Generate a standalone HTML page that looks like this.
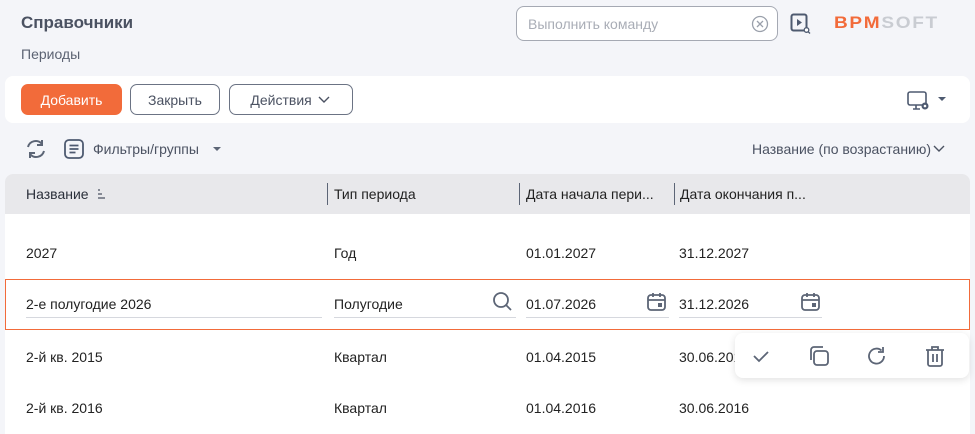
<!DOCTYPE html><html><head><meta charset="utf-8"><style>
body{margin:0;width:975px;height:434px;overflow:hidden;background:#f4f5f9;font-family:"Liberation Sans",sans-serif;position:relative;color:#1f2533}
.a{position:absolute}
.btn{position:absolute;top:84px;height:31px;box-sizing:border-box;border:1px solid #6b7384;border-radius:7px;background:#fff;font-size:14px;color:#4b5262;display:flex;align-items:center;justify-content:center}
.t{position:absolute;font-size:14px;color:#222}
.ul{position:absolute;height:1px;background:#d6d8de}
</style></head><body>
<div class="a" style="left:21px;top:13px;font-size:17px;font-weight:bold;color:#4b5262">Справочники</div>
<div class="a" style="left:21px;top:46px;font-size:14px;color:#5c6373">Периоды</div>
<div class="a" style="left:516px;top:6px;width:262px;height:35px;box-sizing:border-box;border:1px solid #a5a9b3;border-radius:8px;background:#fff"></div>
<div class="a" style="left:528px;top:16px;font-size:14px;color:#a9adb6">Выполнить команду</div>
<svg class="a" style="left:751px;top:15px" width="18" height="18"><circle cx="9" cy="9" r="7.5" fill="none" stroke="#9aa0ab" stroke-width="1.3"/><path d="M6 6l6 6M12 6l-6 6" stroke="#9aa0ab" stroke-width="1.3"/></svg>
<svg class="a" style="left:790px;top:13px" width="22" height="22"><rect x="1.5" y="1.5" width="15" height="16" rx="2" fill="none" stroke="#4e5a70" stroke-width="2"/><path d="M7 6l5 3.5-5 3.5z" fill="#4e5a70"/><circle cx="16.5" cy="17" r="2.3" fill="#fff" stroke="#4e5a70" stroke-width="1.3"/><path d="M18 18.5l2 2" stroke="#4e5a70" stroke-width="1.3"/></svg>
<div class="a" style="left:834px;top:13px;font-size:17px;font-weight:bold;letter-spacing:1.5px;transform:scaleX(1.12);transform-origin:left"><span style="color:#f26b3a">BPM</span><span style="color:#c9ccd2">SOFT</span></div>
<div class="a" style="left:5px;top:76px;width:965px;height:47px;background:#fff;border-radius:8px"></div>
<div class="btn" style="left:21px;width:101px;background:#f26b3a;border-color:#f26b3a;color:#fff">Добавить</div>
<div class="btn" style="left:130px;width:90px">Закрыть</div>
<div class="btn" style="left:229px;width:124px">Действия&nbsp;<svg width="16" height="10"><path d="M3 2l5 5 5-5" fill="none" stroke="#4b5262" stroke-width="1.4"/></svg></div>
<svg class="a" style="left:907px;top:90px" width="24" height="22"><rect x="1" y="2" width="18" height="13" rx="2" fill="none" stroke="#4e5a70" stroke-width="1.6"/><path d="M6 19h7M9 15v4" stroke="#4e5a70" stroke-width="1.6"/><circle cx="18" cy="16" r="3.5" fill="#4e5a70"/><circle cx="18" cy="16" r="1.3" fill="#fff"/></svg>
<svg class="a" style="left:937px;top:96px" width="10" height="6"><path d="M1 1h8l-4 4z" fill="#4e5a70"/></svg>
<svg class="a" style="left:25px;top:138px" width="22" height="22"><path d="M3 9a8 8 0 0 1 14-3M19 13a8 8 0 0 1-14 3" fill="none" stroke="#5c6576" stroke-width="2"/><path d="M17 2v5h-5M5 20v-5h5" fill="none" stroke="#5c6576" stroke-width="2"/></svg>
<svg class="a" style="left:63px;top:138px" width="22" height="22"><rect x="2" y="2" width="18" height="18" rx="4" fill="none" stroke="#4e5a70" stroke-width="1.8"/><path d="M6.5 7.5h9M6.5 11h9M6.5 14.5h6" stroke="#4e5a70" stroke-width="1.8"/></svg>
<div class="a" style="left:93px;top:141px;font-size:14px;color:#4b5262">Фильтры/группы</div>
<svg class="a" style="left:212px;top:146px" width="10" height="6"><path d="M1 1h8l-4 4z" fill="#5c6576"/></svg>
<div class="a" style="left:752px;top:141px;font-size:14px;color:#4b5262">Название (по возрастанию)</div>
<svg class="a" style="left:932px;top:144px" width="14" height="10"><path d="M2 2l5 5 5-5" fill="none" stroke="#4b5262" stroke-width="1.4"/></svg>
<div class="a" style="left:5px;top:174px;width:965px;height:260px;background:#fff;border-radius:8px 8px 0 0"></div>
<div class="a" style="left:5px;top:174px;width:965px;height:40px;background:#e8e8eb;border-radius:8px 8px 0 0"></div>
<div class="t" style="left:26px;top:186px;color:#2a2f3a">Название</div>
<svg class="a" style="left:96px;top:188px" width="10" height="12"><path d="M2 2h2M2 6h4M2 10h7" stroke="#4b5262" stroke-width="1.3"/></svg>
<div class="a" style="left:327px;top:183px;width:1px;height:22px;background:#5c6576"></div>
<div class="t" style="left:334px;top:186px">Тип периода</div>
<div class="a" style="left:519px;top:183px;width:1px;height:22px;background:#5c6576"></div>
<div class="t" style="left:526px;top:186px">Дата начала пери...</div>
<div class="a" style="left:674px;top:183px;width:1px;height:22px;background:#5c6576"></div>
<div class="t" style="left:680px;top:186px">Дата окончания п...</div>
<div class="t" style="left:26px;top:245px">2027</div><div class="t" style="left:334px;top:245px">Год</div><div class="t" style="left:526px;top:245px">01.01.2027</div><div class="t" style="left:679px;top:245px">31.12.2027</div>
<div class="a" style="left:5px;top:279px;width:965px;height:1px;background:#f26b3a;z-index:5"></div>
<div class="a" style="left:5px;top:329px;width:965px;height:1px;background:#f26b3a;z-index:5"></div>
<div class="a" style="left:5px;top:279px;width:1px;height:51px;background:#f26b3a;z-index:5"></div>
<div class="a" style="left:969px;top:279px;width:1px;height:51px;background:#f26b3a;z-index:5"></div>
<div class="t" style="left:26px;top:296px">2-е полугодие 2026</div><div class="ul" style="left:26px;top:317px;width:296px"></div>
<div class="t" style="left:334px;top:296px">Полугодие</div><div class="ul" style="left:334px;top:317px;width:182px"></div>
<svg class="a" style="left:492px;top:291px" width="22" height="22"><circle cx="9" cy="9" r="7" fill="none" stroke="#5c6576" stroke-width="1.8"/><path d="M14 14l5 5" stroke="#5c6576" stroke-width="1.8"/></svg>
<div class="t" style="left:526px;top:296px">01.07.2026</div><div class="ul" style="left:526px;top:317px;width:143px"></div>
<div class="t" style="left:679px;top:296px">31.12.2026</div><div class="ul" style="left:679px;top:317px;width:143px"></div>
<svg class="a" style="left:646px;top:291px" width="22" height="22"><rect x="2" y="4" width="17" height="15" rx="3" fill="none" stroke="#5c6576" stroke-width="1.8"/><path d="M2 9h17M7 2v4M14 2v4" stroke="#5c6576" stroke-width="1.8"/><rect x="12" y="12" width="4" height="4" fill="#5c6576"/></svg>
<svg class="a" style="left:800px;top:291px" width="22" height="22"><rect x="2" y="4" width="17" height="15" rx="3" fill="none" stroke="#5c6576" stroke-width="1.8"/><path d="M2 9h17M7 2v4M14 2v4" stroke="#5c6576" stroke-width="1.8"/><rect x="12" y="12" width="4" height="4" fill="#5c6576"/></svg>
<div class="t" style="left:26px;top:349px">2-й кв. 2015</div><div class="t" style="left:334px;top:349px">Квартал</div><div class="t" style="left:526px;top:349px">01.04.2015</div><div class="t" style="left:679px;top:349px">30.06.2015</div>
<div class="t" style="left:26px;top:400px">2-й кв. 2016</div><div class="t" style="left:334px;top:400px">Квартал</div><div class="t" style="left:526px;top:400px">01.04.2016</div><div class="t" style="left:679px;top:400px">30.06.2016</div>
<div class="a" style="left:735px;top:333px;width:234px;height:45px;background:#fff;border-radius:8px;box-shadow:0 2px 8px rgba(0,0,0,.12)"></div>
<svg class="a" style="left:750px;top:345px" width="22" height="22"><path d="M4 11l5 5 9-9" fill="none" stroke="#5c6576" stroke-width="1.8"/></svg>
<svg class="a" style="left:808px;top:345px" width="22" height="22"><rect x="6" y="6" width="14" height="14" rx="3" fill="none" stroke="#5c6576" stroke-width="1.8"/><path d="M3 15V5a3 3 0 0 1 3-3h9" fill="none" stroke="#5c6576" stroke-width="1.8"/></svg>
<svg class="a" style="left:866px;top:345px" width="22" height="22"><path d="M18 11a7.5 7.5 0 1 1-2.5-5.5" fill="none" stroke="#5c6576" stroke-width="1.8"/><path d="M17 2v5h-5" fill="none" stroke="#5c6576" stroke-width="1.8"/></svg>
<svg class="a" style="left:924px;top:345px" width="22" height="22"><path d="M2 5h18M8 5V2h6v3M4 5v14a2 2 0 0 0 2 2h10a2 2 0 0 0 2-2V5M9 9v8M13 9v8" fill="none" stroke="#5c6576" stroke-width="1.8"/></svg>
</body></html>
